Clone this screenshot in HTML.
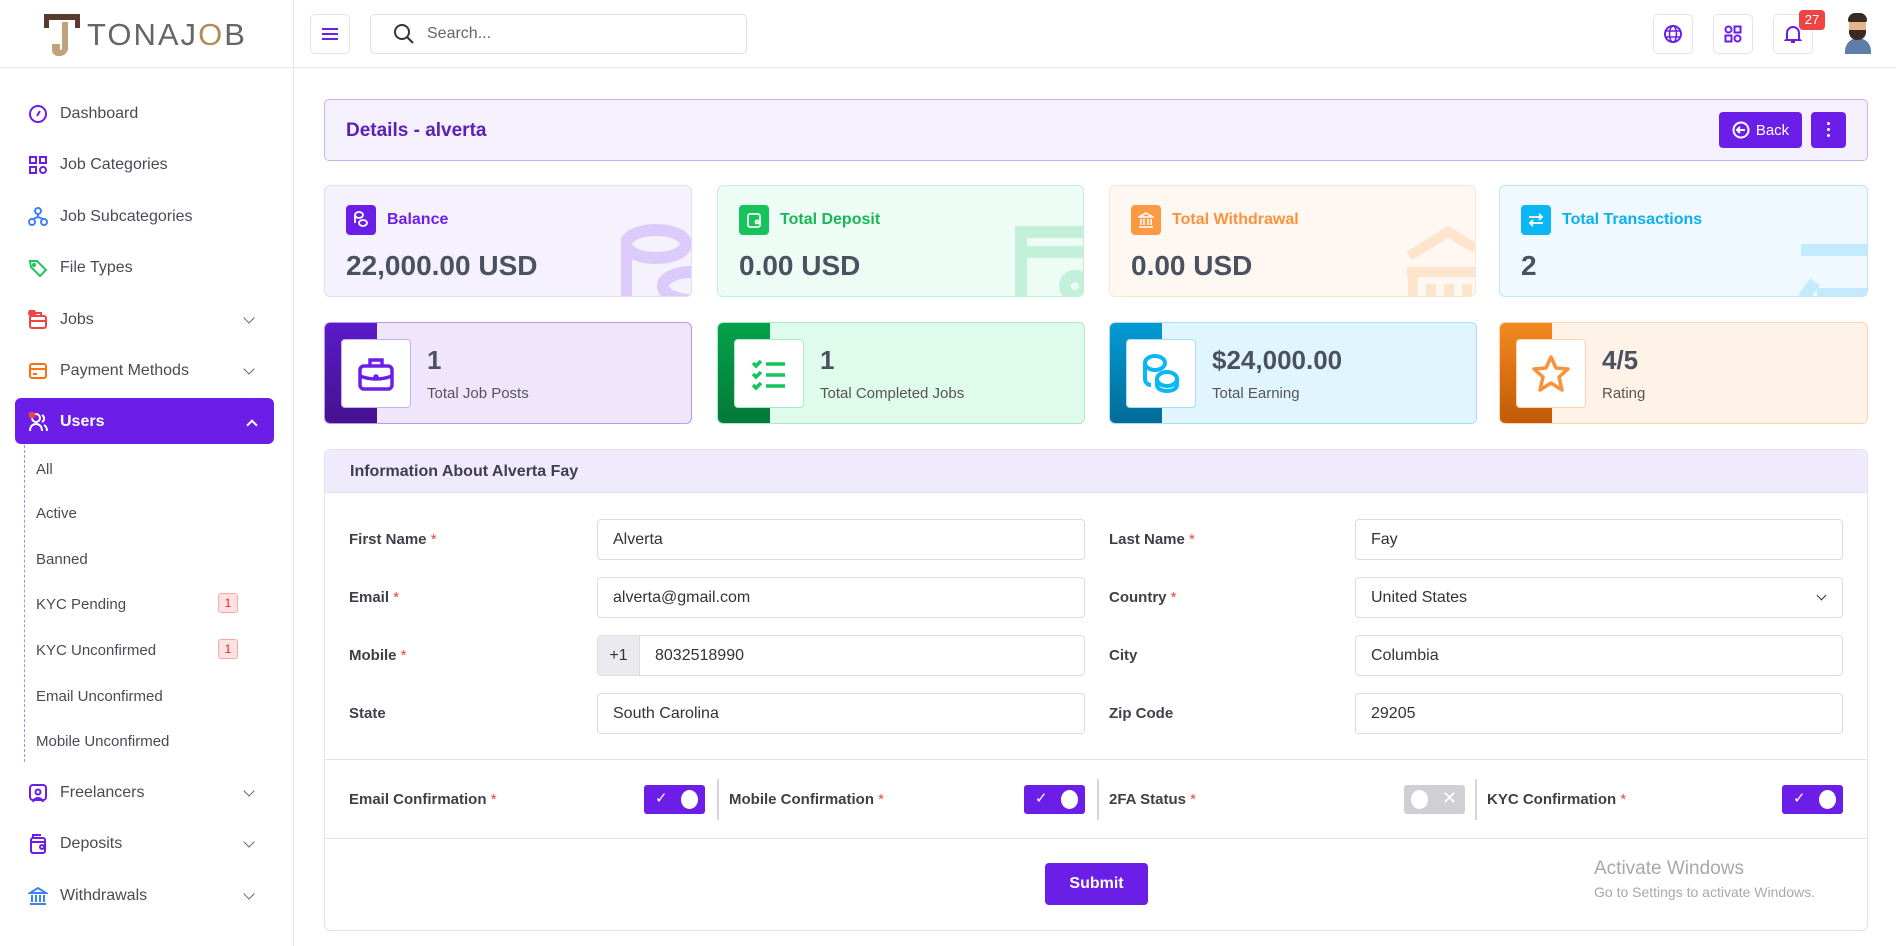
<!DOCTYPE html>
<html><head><meta charset="utf-8"><style>
*{box-sizing:border-box;margin:0;padding:0}
body{width:1896px;height:946px;overflow:hidden;background:#fff;font-family:"Liberation Sans",sans-serif;color:#4b4b5a;position:relative}
.a{position:absolute}
.hdr{left:0;top:0;width:1896px;height:68px;border-bottom:1px solid #e5e5ea;background:#fff}
.sb{left:0;top:0;width:294px;height:946px;border-right:1px solid #e5e5ea}
.ibtn{width:40px;height:40px;border:1px solid #e3e3ea;border-radius:5px;display:flex;align-items:center;justify-content:center;background:#fff}
.nav{left:28px;font-size:16px;color:#4a4a55;display:flex;align-items:center;height:24px}
.nav svg{margin-right:12px}
.chev{left:245px;width:8px;height:8px;border-right:1.6px solid #666;border-bottom:1.6px solid #666;transform:rotate(45deg)}
.sub{left:36px;font-size:15px;color:#4a4a55}
.bdg{left:218px;width:20px;height:20px;border:1px solid #fca5a5;background:#fee2e2;color:#dc2626;border-radius:3px;font-size:12px;text-align:center;line-height:18px}
.card{border-radius:6px}
.lbl{font-size:16px;font-weight:600}
.val{font-size:28px;font-weight:700;color:#4a5260}
.sic{width:30px;height:30px;border-radius:4px;display:flex;align-items:center;justify-content:center}
.c2{height:102px;top:322px;width:368px;border-radius:6px;overflow:hidden}
.strip{left:0;top:0;width:52px;height:100%}
.wbox{left:16px;top:16px;width:70px;height:69px;background:#fff;border-radius:4px;display:flex;align-items:center;justify-content:center}
.n2{left:102px;top:22px;font-size:26px;font-weight:600;color:#4a5260}
.l2{left:102px;top:62px;font-size:15px;color:#555}
.fl{font-size:15px;color:#3f3f4a;font-weight:600}
.fl b{color:#ef4444;font-weight:400}
.inp{height:41px;border:1px solid #dcdce3;border-radius:4px;font-size:16px;color:#333;padding-left:15px;line-height:39px;background:#fff}
.tg{width:61px;height:29px;background:#6b1ee8;border-radius:3px}
.tg:after{content:"";position:absolute;right:7px;top:5px;width:17px;height:19px;border-radius:50%;background:#fff}
.sep{width:2px;height:41px;background:#d4d4da;top:779px}
</style></head><body>
<div class="a hdr"></div>
<div class="a sb"></div>
<div class="a" style="left:44px;top:14px;width:36px;height:42px">
<div class="a" style="left:0;top:0;width:36px;height:6px;background:#5b3a2e"></div>
<div class="a" style="left:0;top:0;width:5px;height:14px;background:#5b3a2e"></div>
<div class="a" style="left:31px;top:0;width:5px;height:14px;background:#5b3a2e"></div>
<div class="a" style="left:14px;top:8px;width:10px;height:34px;border:6px solid #c2a27a;border-top:none;border-left:none;border-radius:0 0 8px 0"></div>
<div class="a" style="left:8px;top:30px;width:8px;height:12px;background:#c2a27a;border-radius:0 0 0 6px"></div>
</div>
<div class="a" style="left:87px;top:17px;font-size:31px;color:#666;letter-spacing:2px">TONAJ<span style="color:#b38a5a">O</span>B</div>
<div class="a ibtn" style="left:310px;top:14px"><svg width="18" height="14"><path d="M1 2H17M1 7H17M1 12H17" stroke="#6b1ee8" stroke-width="2"/></svg></div>
<div class="a" style="left:370px;top:14px;width:377px;height:40px;border:1px solid #dedee5;border-radius:5px"></div>
<svg class="a" style="left:392px;top:22px" width="24" height="24"><circle cx="10" cy="10" r="7" fill="none" stroke="#333" stroke-width="2"/><path d="M15 15L21 21" stroke="#333" stroke-width="2"/></svg>
<div class="a" style="left:427px;top:25px;font-size:16px;color:#666">Search...</div>
<div class="a ibtn" style="left:1653px;top:14px"><svg width="20" height="20"><circle cx="10" cy="10" r="8" fill="none" stroke="#6b1ee8" stroke-width="2"/><ellipse cx="10" cy="10" rx="3.5" ry="8" fill="none" stroke="#6b1ee8" stroke-width="1.6"/><path d="M2 7H18M2 13H18" stroke="#6b1ee8" stroke-width="1.6"/></svg></div>
<div class="a ibtn" style="left:1713px;top:14px"><svg width="18" height="18" fill="none" stroke="#6b1ee8" stroke-width="2"><circle cx="4.5" cy="4.5" r="3"/><rect x="10.5" y="1.5" width="6" height="6"/><rect x="1.5" y="10.5" width="6" height="6"/><circle cx="13.5" cy="13.5" r="3"/></svg></div>
<div class="a ibtn" style="left:1773px;top:14px"><svg width="18" height="20" fill="none" stroke="#6b1ee8" stroke-width="2"><path d="M3 15V9a6 6 0 0112 0v6l1 1H2z M7 18h4"/></svg></div>
<div class="a" style="left:1799px;top:10px;width:26px;height:20px;background:#ef4444;border-radius:4px;color:#fff;font-size:13px;text-align:center;line-height:20px">27</div>
<div class="a" style="left:1842px;top:12px;width:30px;height:40px">
<div class="a" style="left:3px;top:26px;width:26px;height:16px;border-radius:13px 13px 0 0;background:#5d7ea8"></div>
<div class="a" style="left:7px;top:4px;width:17px;height:24px;border-radius:8px;background:#e8b48e"></div>
<div class="a" style="left:6px;top:1px;width:19px;height:9px;border-radius:8px 8px 2px 2px;background:#3a2a22"></div>
<div class="a" style="left:7px;top:18px;width:17px;height:10px;border-radius:0 0 8px 8px;background:#3a2a22"></div>
</div>

<div class="a nav" style="top:102px"><svg width="20" height="20"><circle cx="10" cy="10" r="8" fill="none" stroke="#6b1ee8" stroke-width="2"/><path d="M9 12l3-5" stroke="#6b1ee8" stroke-width="2"/></svg>Dashboard</div>
<div class="a nav" style="top:153px"><svg width="20" height="20" fill="none" stroke="#6b1ee8" stroke-width="2"><rect x="2" y="2" width="6" height="6"/><rect x="12" y="2" width="6" height="6"/><rect x="2" y="12" width="6" height="6"/><circle cx="15" cy="15" r="3"/></svg>Job Categories</div>
<div class="a nav" style="top:205px"><svg width="20" height="20" fill="none" stroke="#3b82f6" stroke-width="2"><circle cx="10" cy="4" r="3"/><circle cx="4" cy="15" r="3"/><circle cx="16" cy="15" r="3"/><path d="M10 7v3M5 12l5-2 5 2"/></svg>Job Subcategories</div>
<div class="a nav" style="top:256px"><svg width="20" height="20" fill="none" stroke="#22c55e" stroke-width="2"><path d="M2 3h7l9 9-6 6-9-9z"/><circle cx="6" cy="7" r="1"/></svg>File Types</div>
<div class="a nav" style="top:308px"><svg width="20" height="20" fill="none" stroke="#ef4444" stroke-width="2"><rect x="2" y="6" width="16" height="12" rx="2"/><path d="M7 6V3h6v3M2 11h16"/><circle cx="4" cy="3" r="3" fill="#ef4444"/></svg>Jobs</div>
<div class="a chev" style="top:314px"></div>
<div class="a nav" style="top:359px"><svg width="20" height="20" fill="none" stroke="#f97316" stroke-width="2"><rect x="2" y="3" width="16" height="14" rx="2"/><path d="M2 8h16M5 13h4"/></svg>Payment Methods</div>
<div class="a chev" style="top:365px"></div>
<div class="a" style="left:15px;top:398px;width:259px;height:46px;background:#6b1ee8;border-radius:6px"></div>
<div class="a nav" style="top:410px;color:#fff;font-weight:600"><svg width="20" height="20" fill="none" stroke="#fff" stroke-width="2"><circle cx="8" cy="6" r="4"/><path d="M2 19c0-5 3-7 6-7s6 2 6 7M14 3a4 4 0 010 7M16 13c2 1 3 3 3 6"/><circle cx="4" cy="3" r="3.5" fill="#ef4444" stroke="none"/></svg>Users</div>
<div class="a" style="left:248px;top:421px;width:8px;height:8px;border-left:2px solid #fff;border-top:2px solid #fff;transform:rotate(45deg)"></div>
<div class="a" style="left:24px;top:445px;height:317px;border-left:1px dashed #a78bfa"></div>
<div class="a sub" style="top:461px">All</div>
<div class="a sub" style="top:505px">Active</div>
<div class="a sub" style="top:551px">Banned</div>
<div class="a sub" style="top:596px">KYC Pending</div><div class="a bdg" style="top:593px">1</div>
<div class="a sub" style="top:642px">KYC Unconfirmed</div><div class="a bdg" style="top:639px">1</div>
<div class="a sub" style="top:688px">Email Unconfirmed</div>
<div class="a sub" style="top:733px">Mobile Unconfirmed</div>
<div class="a nav" style="top:781px"><svg width="20" height="20" fill="none" stroke="#6b1ee8" stroke-width="2"><rect x="2" y="2" width="16" height="15" rx="3"/><circle cx="10" cy="9" r="2.5"/><path d="M5 19c1-3 3-4 5-4s4 1 5 4"/></svg>Freelancers</div>
<div class="a chev" style="top:787px"></div>
<div class="a nav" style="top:832px"><svg width="20" height="20" fill="none" stroke="#6b1ee8" stroke-width="2"><rect x="3" y="4" width="14" height="15" rx="2"/><path d="M3 8h14M5 4V1h8"/><circle cx="14" cy="13" r="2"/></svg>Deposits</div>
<div class="a chev" style="top:838px"></div>
<div class="a nav" style="top:884px"><svg width="20" height="20" fill="none" stroke="#3b82f6" stroke-width="2"><path d="M2 7l8-5 8 5zM2 18h16M4 9v7M8 9v7M12 9v7M16 9v7"/></svg>Withdrawals</div>
<div class="a chev" style="top:890px"></div>

<div class="a" style="left:324px;top:99px;width:1544px;height:62px;background:#f4f1fd;border:1px solid #c9b3f7;border-radius:5px"></div>
<div class="a" style="left:346px;top:120px;font-size:19px;font-weight:600;color:#5b21b6">Details - alverta</div>
<div class="a" style="left:1719px;top:112px;width:83px;height:36px;background:#6b1ee8;border-radius:4px;color:#fff;font-size:15px;display:flex;align-items:center;justify-content:center;gap:6px"><svg width="18" height="18" fill="none" stroke="#fff" stroke-width="2"><circle cx="9" cy="9" r="7.5"/><path d="M13 9H5M8 6L5 9l3 3"/></svg>Back</div>
<div class="a" style="left:1811px;top:112px;width:35px;height:36px;background:#6b1ee8;border-radius:4px"><div class="a" style="left:16px;top:10px;width:3px;height:3px;background:#fff;box-shadow:0 6px 0 #fff,0 12px 0 #fff;border-radius:2px"></div></div>

<div class="a card" style="left:324px;top:185px;width:368px;height:112px;background:#f5f2fd;border:1px solid #e5dbfb;overflow:hidden">
<svg class="a" style="right:0;top:38px" width="70" height="74" fill="none" stroke="#dccafa" stroke-width="12"><ellipse cx="35" cy="20" rx="30" ry="14"/><path d="M5 20v60"/><ellipse cx="70" cy="62" rx="28" ry="14"/></svg>
<div class="a sic" style="left:21px;top:19px;background:#6b1ee8"><svg width="16" height="18" fill="none" stroke="#fff" stroke-width="1.8"><ellipse cx="6" cy="4" rx="4" ry="3"/><ellipse cx="10" cy="12" rx="4" ry="3"/><path d="M2 4v8"/></svg></div>
<div class="a lbl" style="left:62px;top:25px;color:#6b1ee8">Balance</div>
<div class="a val" style="left:21px;top:64px">22,000.00 USD</div></div>
<div class="a card" style="left:717px;top:185px;width:367px;height:112px;background:#edfcf4;border:1px solid #c4efd7;overflow:hidden">
<svg class="a" style="right:0;top:40px" width="68" height="72" fill="none" stroke="#c2f0d8" stroke-width="12"><path d="M6 72V6h62M6 26h62"/><circle cx="60" cy="60" r="10"/></svg>
<div class="a sic" style="left:21px;top:19px;background:#16c45c"><svg width="16" height="18" fill="none" stroke="#fff" stroke-width="1.8"><rect x="2" y="3" width="12" height="13" rx="2"/><circle cx="11" cy="11" r="1.5"/></svg></div>
<div class="a lbl" style="left:62px;top:25px;color:#16b955">Total Deposit</div>
<div class="a val" style="left:21px;top:64px">0.00 USD</div></div>
<div class="a card" style="left:1109px;top:185px;width:367px;height:112px;background:#fff8f2;border:1px solid #fde5d0;overflow:hidden">
<svg class="a" style="right:0;top:38px" width="72" height="74" fill="none" stroke="#fde4cc" stroke-width="10"><path d="M6 32L45 8 72 24M4 48h68M10 52v22M28 60v14M46 60v14M64 60v14"/></svg>
<div class="a sic" style="left:21px;top:19px;background:#fb9a42"><svg width="16" height="18" fill="none" stroke="#fff" stroke-width="1.6"><path d="M1 6l7-4 7 4zM1 16h14M3 8v6M6 8v6M10 8v6M13 8v6"/></svg></div>
<div class="a lbl" style="left:62px;top:25px;color:#fb923c">Total Withdrawal</div>
<div class="a val" style="left:21px;top:64px">0.00 USD</div></div>
<div class="a card" style="left:1499px;top:185px;width:369px;height:112px;background:#f0f9ff;border:1px solid #bfe6fb;overflow:hidden">
<svg class="a" style="right:0;top:58px" width="70" height="54" fill="none" stroke="#c3ebfd" stroke-width="12"><path d="M4 6h70M6 54l12-16M20 50h54"/></svg>
<div class="a sic" style="left:21px;top:19px;background:#0bb6f5"><svg width="18" height="16" fill="none" stroke="#fff" stroke-width="1.8"><path d="M2 5h13M12 2l3 3-3 3M16 11H3M6 8l-3 3 3 3"/></svg></div>
<div class="a lbl" style="left:62px;top:25px;color:#0bb0ee">Total Transactions</div>
<div class="a val" style="left:21px;top:64px">2</div></div>

<div class="a c2" style="left:324px;background:#efe6fc;border:1px solid #b69af5"><div class="a strip" style="background:linear-gradient(#5b1bc7,#45128f)"></div><div class="a wbox" style="border:1px solid #c4b0f5"><svg width="36" height="34" fill="none" stroke="#6b1ee8" stroke-width="3.5"><rect x="2" y="9" width="32" height="23" rx="4"/><path d="M12 9V3h12v6M2 19c10 4 22 4 32 0"/><circle cx="18" cy="20" r="1" fill="#6b1ee8"/></svg></div><div class="a n2">1</div><div class="a l2">Total Job Posts</div></div>
<div class="a c2" style="left:717px;background:#dffbeb;border:1px solid #a7ecc4"><div class="a strip" style="background:linear-gradient(#04a24a,#047a38)"></div><div class="a wbox" style="border:1px solid #a7ecc4"><svg width="36" height="34" fill="none" stroke="#16c45c" stroke-width="3.5"><path d="M2 6l3 3 5-5M2 17l3 3 5-5M2 28l3 3 5-5M15 7h19M15 18h19M15 29h19"/></svg></div><div class="a n2">1</div><div class="a l2">Total Completed Jobs</div></div>
<div class="a c2" style="left:1109px;background:#e1f5fe;border:1px solid #a8def8"><div class="a strip" style="background:linear-gradient(#039bd4,#026c98)"></div><div class="a wbox" style="border:1px solid #a8def8"><svg width="40" height="40" fill="none" stroke="#0bb6f5" stroke-width="4"><ellipse cx="14" cy="9" rx="10" ry="7"/><path d="M4 9v16c0 4 3 6 6 6"/><ellipse cx="26" cy="25" rx="10" ry="7"/><path d="M16 25v6c0 4 5 6 10 6s10-2 10-6v-6"/></svg></div><div class="a n2">$24,000.00</div><div class="a l2">Total Earning</div></div>
<div class="a c2" style="left:1499px;width:369px;background:#fff3e8;border:1px solid #fbd4b0"><div class="a strip" style="background:linear-gradient(#f28a1f,#c25a08)"></div><div class="a wbox" style="border:1px solid #fbd4b0"><svg width="40" height="40" fill="none" stroke="#fb923c" stroke-width="3.5" stroke-linejoin="round"><path d="M20 3l5 11 12 1-9 8 3 13-11-7-11 7 3-13-9-8 12-1z"/></svg></div><div class="a n2">4/5</div><div class="a l2">Rating</div></div>

<div class="a" style="left:324px;top:449px;width:1544px;height:482px;border:1px solid #e3e3ea;border-radius:6px;overflow:hidden">
<div class="a" style="left:0;top:0;width:100%;height:43px;background:#efebfc;border-bottom:1px solid #e1dcf3"></div>
<div class="a" style="left:25px;top:13px;font-size:16px;font-weight:700;color:#3f3f4a">Information About Alverta Fay</div>
<div class="a" style="left:0;top:309px;width:100%;height:1px;background:#e3e3ea"></div>
<div class="a" style="left:0;top:388px;width:100%;height:1px;background:#e3e3ea"></div>
</div>
<div class="a fl" style="left:349px;top:531px">First Name <b>*</b></div>
<div class="a inp" style="left:597px;top:519px;width:488px">Alverta</div>
<div class="a fl" style="left:1109px;top:531px">Last Name <b>*</b></div>
<div class="a inp" style="left:1355px;top:519px;width:488px">Fay</div>
<div class="a fl" style="left:349px;top:589px">Email <b>*</b></div>
<div class="a inp" style="left:597px;top:577px;width:488px">alverta@gmail.com</div>
<div class="a fl" style="left:1109px;top:589px">Country <b>*</b></div>
<div class="a inp" style="left:1355px;top:577px;width:488px">United States</div>
<div class="a" style="left:1818px;top:592px;width:7px;height:7px;border-right:1.6px solid #333;border-bottom:1.6px solid #333;transform:rotate(45deg)"></div>
<div class="a fl" style="left:349px;top:647px">Mobile <b>*</b></div>
<div class="a inp" style="left:597px;top:635px;width:488px;padding-left:57px">8032518990</div>
<div class="a" style="left:598px;top:636px;width:42px;height:39px;background:#ebebef;border-right:1px solid #dcdce3;font-size:16px;line-height:39px;text-align:center;color:#333">+1</div>
<div class="a fl" style="left:1109px;top:647px">City</div>
<div class="a inp" style="left:1355px;top:635px;width:488px">Columbia</div>
<div class="a fl" style="left:349px;top:705px">State</div>
<div class="a inp" style="left:597px;top:693px;width:488px">South Carolina</div>
<div class="a fl" style="left:1109px;top:705px">Zip Code</div>
<div class="a inp" style="left:1355px;top:693px;width:488px">29205</div>

<div class="a fl" style="left:349px;top:791px">Email Confirmation <b>*</b></div>
<div class="a tg" style="left:644px;top:785px"><span class="a" style="left:11px;top:4px;color:#fff;font-size:15px">✓</span></div>
<div class="a sep" style="left:717px"></div>
<div class="a fl" style="left:729px;top:791px">Mobile Confirmation <b>*</b></div>
<div class="a tg" style="left:1024px;top:785px"><span class="a" style="left:11px;top:4px;color:#fff;font-size:15px">✓</span></div>
<div class="a sep" style="left:1097px"></div>
<div class="a fl" style="left:1109px;top:791px">2FA Status <b>*</b></div>
<div class="a" style="left:1404px;top:785px;width:61px;height:29px;background:#d0d0d4;border-radius:3px"><div class="a" style="left:7px;top:5px;width:17px;height:19px;border-radius:50%;background:#fff"></div><span class="a" style="left:38px;top:3px;color:#fff;font-size:18px">✕</span></div>
<div class="a sep" style="left:1475px"></div>
<div class="a fl" style="left:1487px;top:791px">KYC Confirmation <b>*</b></div>
<div class="a tg" style="left:1782px;top:785px"><span class="a" style="left:11px;top:4px;color:#fff;font-size:15px">✓</span></div>

<div class="a" style="left:1045px;top:863px;width:103px;height:42px;background:#6b1ee8;border-radius:4px;color:#fff;font-size:16px;font-weight:600;text-align:center;line-height:42px">Submit</div>
<div class="a" style="left:1594px;top:858px;font-size:19px;color:#a8a8ad">Activate Windows</div>
<div class="a" style="left:1594px;top:884px;font-size:14px;color:#a8a8ad">Go to Settings to activate Windows.</div>
</body></html>
